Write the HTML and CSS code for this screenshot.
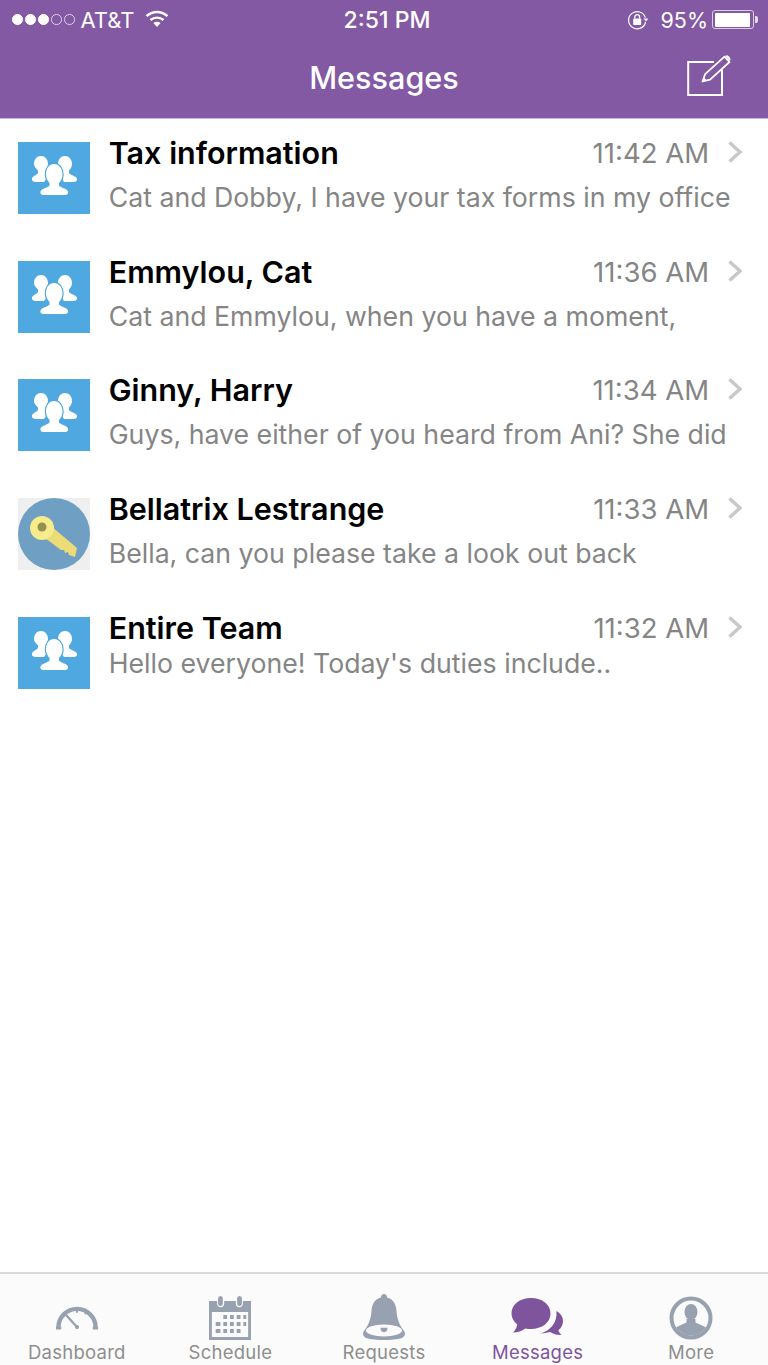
FILE: index.html
```html
<!DOCTYPE html>
<html lang="en">
<head>
<meta charset="utf-8">
<title>Messages</title>
<link rel="stylesheet" href="styles.css">
</head>
<body>
<div class="app">
  <header class="topbar">
    <div class="status">
      <div class="status-left">
        <span class="dots"><i class="dot on"></i><i class="dot on"></i><i class="dot on"></i><i class="dot"></i><i class="dot"></i></span>
        <span class="carrier">AT&amp;T</span>
        <svg class="wifi" width="24" height="18" viewBox="0 0 24 18" fill="none" stroke="#fff" stroke-width="2.4"><path d="M1.5 6.2C7.5 .6 16.5 .6 22.5 6.2"/><path d="M5.5 10C9.2 6.8 14.8 6.8 18.5 10"/><path d="M12 17l-3.6-4c2-1.6 5.2-1.6 7.2 0z" fill="#fff" stroke="none"/></svg>
      </div>
      <div class="clock">2:51 PM</div>
      <div class="status-right">
        <svg class="lock" width="22" height="20" viewBox="0 0 22 20" fill="none"><path d="M18.4 7.6A8.6 8.6 0 1 0 18.6 12" stroke="#fff" stroke-width="1.2"/><path d="M16.4 8.6h5l-2.5 3z" fill="#fff"/><rect x="6.2" y="8.4" width="8" height="6.6" rx=".8" fill="#fff"/><path d="M7.8 8.6V7a2.4 2.4 0 0 1 4.8 0v1.6" stroke="#fff" stroke-width="1.3"/></svg>
        <span class="pct">95%</span>
        <span class="battery"><span class="battery-fill"></span></span><span class="nub"></span>
      </div>
    </div>
    <div class="navbar">
      <h1 class="title">Messages</h1>
      <svg class="compose" width="46" height="44" viewBox="0 0 46 44" fill="none"><path d="M35 15.500V41H1.200V8H27" stroke="#fff" stroke-width="2"/><path d="M15.500 27.500l2.600-7.300L37.500 2.600l5 5.400-19.400 17.600z" stroke="#fff" stroke-width="1.800" stroke-linejoin="round"/><path d="M38.200 1.900a2.300 2.300 0 0 1 3.300.2l1.400 1.500a2.300 2.300 0 0 1-.2 3.300z" fill="#fff"/><path d="M15.500 27.500l1-4.300 3.300 3z" fill="#fff"/></svg>
    </div>
  </header>

  <main class="list">
    <article class="row">
      <div class="avatar group"><svg width="72" height="72" viewBox="0 0 72 72"><use href="#people"/></svg></div>
      <div class="body">
        <div class="line"><span class="name">Tax information</span><span class="time">11:42 AM</span></div>
        <p class="preview">Cat and Dobby, I have your tax forms in my office</p>
      </div>
      <svg class="chev" width="14" height="22" viewBox="0 0 14 22" fill="none"><path d="M1.500 1.500L12 11 1.500 20.500"/></svg>
    </article>
    <article class="row">
      <div class="avatar group"><svg width="72" height="72" viewBox="0 0 72 72"><use href="#people"/></svg></div>
      <div class="body">
        <div class="line"><span class="name">Emmylou, Cat</span><span class="time">11:36 AM</span></div>
        <p class="preview">Cat and Emmylou, when you have a moment,</p>
      </div>
      <svg class="chev" width="14" height="22" viewBox="0 0 14 22" fill="none"><path d="M1.500 1.500L12 11 1.500 20.500"/></svg>
    </article>
    <article class="row">
      <div class="avatar group"><svg width="72" height="72" viewBox="0 0 72 72"><use href="#people"/></svg></div>
      <div class="body">
        <div class="line"><span class="name">Ginny, Harry</span><span class="time">11:34 AM</span></div>
        <p class="preview">Guys, have either of you heard from Ani? She did</p>
      </div>
      <svg class="chev" width="14" height="22" viewBox="0 0 14 22" fill="none"><path d="M1.500 1.500L12 11 1.500 20.500"/></svg>
    </article>
    <article class="row">
      <div class="avatar key">
        <svg width="72" height="72" viewBox="0 0 72 72"><circle cx="36" cy="36" r="36" fill="#6f9fc3"/><path d="M33 28L59 50 57 59 51 57 50 54 47 55 46 52 43 52 27 40z" fill="#ecdc78"/><circle cx="24" cy="30" r="12" fill="#f6ec8c"/><circle cx="24" cy="29" r="4.500" fill="#94904e"/></svg>
      </div>
      <div class="body">
        <div class="line"><span class="name">Bellatrix Lestrange</span><span class="time">11:33 AM</span></div>
        <p class="preview">Bella, can you please take a look out back</p>
      </div>
      <svg class="chev" width="14" height="22" viewBox="0 0 14 22" fill="none"><path d="M1.500 1.500L12 11 1.500 20.500"/></svg>
    </article>
    <article class="row">
      <div class="avatar group"><svg width="72" height="72" viewBox="0 0 72 72"><use href="#people"/></svg></div>
      <div class="body">
        <div class="line"><span class="name">Entire Team</span><span class="time">11:32 AM</span></div>
        <p class="preview tight">Hello everyone! Today's duties include..</p>
      </div>
      <svg class="chev" width="14" height="22" viewBox="0 0 14 22" fill="none"><path d="M1.500 1.500L12 11 1.500 20.500"/></svg>
    </article>
  </main>

  <nav class="tabs">
    <div class="tab">
      <svg class="gauge" width="44" height="27" viewBox="0 0 46 28" fill="none"><path d="M3.500 24.500a19.500 19.500 0 0 1 39 0" stroke="#98a1b0" stroke-width="4.500"/><path d="M1 25h5.500M39.500 25h5.500" stroke="#98a1b0" stroke-width="3"/><path d="M23 4v5M33.500 7.500l-2 3" stroke="#98a1b0" stroke-width="2"/><path d="M12 12l11 12" stroke="#98a1b0" stroke-width="2.400" stroke-linecap="round"/><circle cx="23" cy="24" r="2.200" fill="#98a1b0"/></svg>
      <span class="tab-label">Dashboard</span>
    </div>
    <div class="tab">
      <svg width="42" height="44" viewBox="0 0 44 44" preserveAspectRatio="none"><path fill-rule="evenodd" fill="#98a1b0" d="M0 5h8.500v2.500a3.700 3.700 0 0 0 7.400 0V5h12.200v2.500a3.700 3.700 0 0 0 7.400 0V5H44v39H0zM3 16v25h38V16z"/><rect x="9.500" y="0" width="5" height="10" rx="2.500" fill="#98a1b0"/><rect x="29.500" y="0" width="5" height="10" rx="2.500" fill="#98a1b0"/><g fill="#98a1b0"><rect x="15" y="19" width="4" height="4"/><rect x="22" y="19" width="4" height="4"/><rect x="29" y="19" width="4" height="4"/><rect x="36" y="19" width="3" height="4"/><rect x="7" y="26" width="5" height="4"/><rect x="15" y="26" width="4" height="4"/><rect x="22" y="26" width="4" height="4"/><rect x="29" y="26" width="4" height="4"/><rect x="36" y="26" width="3" height="4"/><rect x="7" y="33" width="5" height="4"/><rect x="15" y="33" width="4" height="4"/><rect x="22" y="33" width="4" height="4"/><rect x="29" y="33" width="4" height="4"/></g></svg>
      <span class="tab-label">Schedule</span>
    </div>
    <div class="tab">
      <svg width="44" height="46" viewBox="0 0 44 46"><path fill="#98a1b0" d="M22 0a3 3 0 0 1 3 3.400c6.500 1.600 9 7 9.500 13 .5 8 2.500 14 7.500 20.500 2 2.800 1 5.500-2 7-9.500 2.700-26.500 2.700-36 0-3-1.500-4-4.200-2-7C7 30.400 9 24.400 9.500 16.400c.5-6 3-11.400 9.500-13A3 3 0 0 1 22 0z"/><ellipse cx="22" cy="36.500" rx="18" ry="6" fill="#fbfbfb"/><path fill="#98a1b0" d="M18.500 33.800h7c0 3-1.500 4.500-3.500 4.500s-3.500-1.500-3.500-4.500z"/></svg>
      <span class="tab-label">Requests</span>
    </div>
    <div class="tab active">
      <svg class="bubbles" width="54" height="42" viewBox="0 0 54 42"><path fill="#7e559d" d="M20 1c11.500 0 19.500 6.500 19.500 15.500S31 32 20 32c-2 0-4-.2-5.700-.6-3.500 2.700-7.500 4-12.300 4.200 2.300-2.300 3.800-4.800 4.200-8C3 24.800.5 21 .5 16.500.5 7.500 8.500 1 20 1z"/><path fill="#7e559d" d="M45.500 14c4.300 2.500 6.500 6 6.500 10 0 4-1.800 7.200-4.600 9.300.4 1.800 1.600 3.500 3.200 4.700-4.700.2-8.300-.7-11.300-3-3.300.8-6.500 1.400-9.800 1.400 9-2.300 17-10 16-22.400z"/></svg>
      <span class="tab-label">Messages</span>
    </div>
    <div class="tab">
      <svg width="44" height="44" viewBox="0 0 44 44"><defs><clipPath id="ring"><circle cx="22" cy="22" r="17.500"/></clipPath></defs><circle cx="22" cy="22" r="19.500" fill="none" stroke="#98a1b0" stroke-width="4"/><g clip-path="url(#ring)" fill="#98a1b0"><ellipse cx="22" cy="16" rx="6.500" ry="8"/><path d="M17.500 23h9v3.500l11 5V44h-31V31.500l11-5z"/></g></svg>
      <span class="tab-label">More</span>
    </div>
  </nav>
</div>

<svg class="defs" width="0" height="0">
  <defs>
    <g id="people" fill="#fff">
      <path d="M23 14c4 0 7 3.500 7 8 0 3-1 5-2.500 6.500v2c0 2 2 3 3 3.500L26 40H18c-3 0-4.500-1.500-4-3.500.5-2.500 5-3.500 6-5.500v-2.500C18.500 27 16 25 16 22c0-4.500 3-8 7-8z"/>
      <path d="M47 14c4 0 7 3.500 7 8 0 3-1.500 5-3 6.500V31c1 2 7 3 8 5.500.5 2-1 3.500-3.500 3.500H46l-4-6c1-.5 3-1.500 3-3.500v-2C43.500 27 40 25 40 22c0-4.500 3-8 7-8z"/>
      <path stroke="#4fa8e0" stroke-width="2.400" paint-order="stroke" d="M36 22c5 0 8.500 4.500 8.500 10.500 0 3.500-1.500 6.500-3.500 8.500v2.500c1 2 8 3 9 6 .5 2-.5 3.500-3 3.500H25.500c-2.500 0-3.500-1.500-3-3.500 1-3 8-4 9-6V41c-2-2-3.500-5-3.500-8.500C28 26.500 31 22 36 22z"/>
    </g>
  </defs>
</svg>
</body>
</html>
```

FILE: styles.css
```css
* { box-sizing: border-box; }
html, body { margin: 0; padding: 0; }
body { background: #fff; font-family: Inter, "Liberation Sans", sans-serif; }
.app { width: 768px; height: 1365px; display: flex; flex-direction: column; overflow: hidden; }

.topbar { height: 119px; background: #8359a3; color: #fff; border-bottom: 1px solid #c9b6d6; flex: none; }
.status { height: 39px; display: grid; grid-template-columns: 1fr auto 1fr; align-items: center; font-size: 22px; }
.status-left { display: flex; align-items: center; padding-left: 12px; }
.dots { display: flex; gap: 2.500px; margin-right: 6px; }
.dot { width: 10.500px; height: 10.500px; border-radius: 50%; border: 1px solid #ddd0e6; }
.dot.on { background: #fff; border-color: #fff; }
.carrier { margin-right: 11px; }
.wifi { margin-top: -2px; }
.clock { font-weight: 500; font-size: 23px; margin-left: 6px; }
.status-right { display: flex; align-items: center; justify-content: flex-end; padding-right: 10px; }
.lock { margin-right: 11px; }
.pct { margin-right: 4px; font-size: 21.500px; }
.battery { width: 42px; height: 19px; border: 1px solid #d9cce3; border-radius: 3px; padding: 1.500px; display: block; }
.battery-fill { display: block; height: 100%; width: 95%; background: #fff; border-radius: 1px; }
.nub { width: 3px; height: 7px; background: #e6dcec; border-radius: 0 2px 2px 0; margin-left: 1px; }
.navbar { height: 79px; display: flex; align-items: center; justify-content: center; position: relative; }
.title { margin: -2px 0 0; font-size: 30.600px; font-weight: 500; }
.compose { position: absolute; left: 687px; top: 15px; }

.list { flex: 1; }
.row { height: 118.700px; padding: 23px 26px 0 18px; display: flex; align-items: flex-start; }
.avatar { width: 72px; height: 72px; flex: none; display: flex; align-items: center; justify-content: center; }
.avatar.group { background: #4fa8e0; }
.avatar.key { background: #efefef; }
.body { flex: 1; min-width: 0; margin-left: 18.700px; margin-top: -8px; }
.line { display: flex; align-items: flex-start; justify-content: space-between; height: 38px; }
.name { font-size: 30.500px; font-weight: 600; color: #000; line-height: 38px; }
.time { font-size: 27.500px; color: #858585; line-height: 38px; }
.preview { margin: 7px 0 0; font-size: 26.700px; line-height: 36px; color: #858585; white-space: nowrap; }
.preview.tight { margin-top: -2px; }
.chev { flex: none; margin: -1px 0 0 19px; stroke: #c7c7cc; stroke-width: 3.500px; }

.tabs { height: 93px; flex: none; border-top: 2px solid #d9d9d9; background: #fbfbfb; display: grid; grid-template-columns: repeat(5, 1fr); }
.tab { display: flex; flex-direction: column; align-items: center; justify-content: flex-end; color: #8e8e8e; padding-bottom: 2px; }
.tab svg { flex: none; margin-bottom: 1px; }
.tab svg.gauge { margin-bottom: 10px; }
.tab svg.bubbles { margin-bottom: 2px; }
.tab-label { font-size: 18.500px; line-height: 22px; letter-spacing: .25px; }
.tab.active { color: #7e559d; }
.defs { position: absolute; }
```
